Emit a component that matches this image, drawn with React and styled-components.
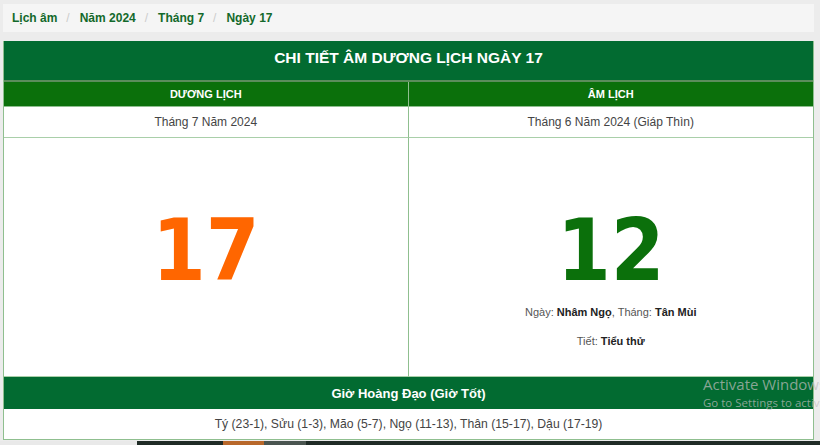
import React from "react";
import styled, { createGlobalStyle } from "styled-components";

const GlobalStyle = createGlobalStyle`
  html, body {
    margin: 0;
    padding: 0;
    background: #ececec;
    font-family: "Liberation Sans", Arial, sans-serif;
    overflow: hidden;
  }
  #root {
    width: 820px;
    height: 445px;
    overflow: hidden;
    position: relative;
  }
`;

const Page = styled.div`
  padding: 4px 6px 0 3px;
  display: flex;
  flex-direction: column;
  gap: 9px;
`;

const Crumbs = styled.ol`
  list-style: none;
  margin: 0;
  padding: 0 9px;
  height: 28px;
  display: flex;
  align-items: center;
  background: #f5f5f5;
`;

const Crumb = styled.li`
  font-size: 12px;
  font-weight: bold;
  color: #13692b;
  & + &::before {
    content: "/";
    color: #cccccc;
    font-weight: normal;
    padding: 0 10px 0 9px;
  }
`;

const Panel = styled.div`
  border: 1px solid #8fbf8f;
  border-top: none;
  background: #fff;
`;

const Title = styled.div`
  height: 41px;
  box-sizing: border-box;
  padding-bottom: 5px;
  background: #026b31;
  color: #fff;
  font-weight: bold;
  font-size: 15.5px;
  display: flex;
  align-items: center;
  justify-content: center;
  border-bottom: 2px solid #5c8d5c;
`;

const Columns = styled.div`
  display: grid;
  grid-template-columns: 1fr 1fr;
`;

const Cell = styled.div`
  border-right: ${(p) => (p.$left ? "1px solid #8fbf8f" : "none")};
  border-bottom: 1px solid #a9cfa9;
  display: flex;
  flex-direction: column;
  align-items: center;
`;

const HeadCell = styled(Cell)`
  height: 24px;
  justify-content: center;
  background: #0b700b;
  color: #fff;
  font-size: 11px;
  font-weight: bold;
  text-transform: uppercase;
  border-bottom: 1px solid #8fbf8f;
`;

const SubCell = styled(Cell)`
  height: 30px;
  justify-content: center;
  font-size: 12px;
  color: #444;
`;

const DayCell = styled(Cell)`
  height: 239px;
  padding-top: 60px;
  box-sizing: border-box;
`;

const BigNumber = styled.div`
  font-family: "DejaVu Sans Condensed", "DejaVu Sans", sans-serif;
  font-stretch: condensed;
  font-weight: bold;
  font-size: 86px;
  line-height: 104px;
  color: ${(p) => p.$color};
`;

const InfoLine = styled.div`
  font-size: 11px;
  color: #555;
  margin-top: ${(p) => p.$top}px;
  b {
    color: #222;
  }
`;

const SectionBar = styled.div`
  height: 32px;
  background: #026b31;
  color: #fff;
  font-size: 13px;
  font-weight: bold;
  display: flex;
  align-items: center;
  justify-content: center;
`;

const HoursRow = styled.div`
  height: 30px;
  display: flex;
  align-items: center;
  justify-content: center;
  font-size: 12.2px;
  color: #444;
`;

const Taskbar = styled.div`
  position: absolute;
  left: 0;
  right: 0;
  top: 441px;
  height: 4px;
  display: grid;
  grid-template-columns: 137px 86px 41px 42px 1fr;
`;

const Seg = styled.div`
  background: ${(p) => p.$bg};
`;

const Watermark = styled.div`
  position: absolute;
  left: 703px;
  top: 374px;
  font-family: "Open Sans", "Noto Sans", sans-serif;
  color: rgba(190, 190, 190, 0.72);
  white-space: nowrap;
  pointer-events: none;
`;

const WmTitle = styled.div`
  font-size: 15px;
  line-height: 20px;
`;

const WmSub = styled.div`
  font-size: 11.5px;
  line-height: 18px;
`;

const hours = "Tý (23-1), Sửu (1-3), Mão (5-7), Ngọ (11-13), Thân (15-17), Dậu (17-19)";

export default function App() {
  return (
    <>
      <GlobalStyle />
      <Page>
        <Crumbs>
          <Crumb>Lịch âm</Crumb>
          <Crumb>Năm 2024</Crumb>
          <Crumb>Tháng 7</Crumb>
          <Crumb>Ngày 17</Crumb>
        </Crumbs>
        <Panel>
          <Title>CHI TIẾT ÂM DƯƠNG LỊCH NGÀY 17</Title>
          <Columns>
            <HeadCell $left>Dương lịch</HeadCell>
            <HeadCell>Âm lịch</HeadCell>
            <SubCell $left>Tháng 7 Năm 2024</SubCell>
            <SubCell>Tháng 6 Năm 2024 (Giáp Thìn)</SubCell>
            <DayCell $left>
              <BigNumber $color="#ff6600">17</BigNumber>
            </DayCell>
            <DayCell>
              <BigNumber $color="#0b700b">12</BigNumber>
              <InfoLine $top={4}>
                Ngày: <b>Nhâm Ngọ</b>, Tháng: <b>Tân Mùi</b>
              </InfoLine>
              <InfoLine $top={17}>
                Tiết: <b>Tiểu thử</b>
              </InfoLine>
            </DayCell>
          </Columns>
          <SectionBar>Giờ Hoàng Đạo (Giờ Tốt)</SectionBar>
          <HoursRow>{hours}</HoursRow>
        </Panel>
      </Page>
      <Watermark>
        <WmTitle>Activate Windows</WmTitle>
        <WmSub>Go to Settings to activate Windows.</WmSub>
      </Watermark>
      <Taskbar>
        <Seg $bg="#e9e9e9" />
        <Seg $bg="#1f2b26" />
        <Seg $bg="#b8672a" />
        <Seg $bg="#4a5550" />
        <Seg $bg="#1f2b26" />
      </Taskbar>
    </>
  );
}
